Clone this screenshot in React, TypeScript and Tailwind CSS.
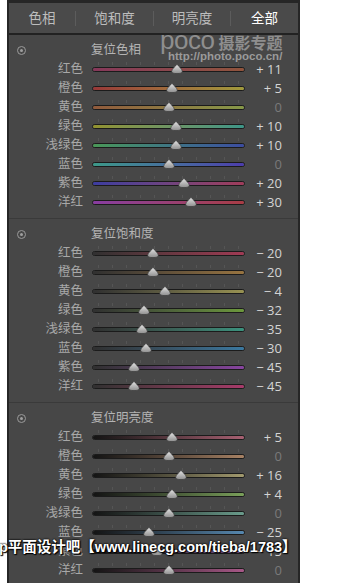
type Row = { label: string; value: number; track: string };

type Section = { title: string; rows: Row[] };

const sections: Section[] = [
  {
    title: "复位色相",
    rows: [
      { label: "红色", value: 11, track: "bg-linear-to-r from-[#86385a] to-[#90543c]" },
      { label: "橙色", value: 5, track: "bg-linear-to-r from-[#983838] to-[#a09a3c]" },
      { label: "黄色", value: 0, track: "bg-linear-to-r from-[#905a3c] to-[#869848]" },
      { label: "绿色", value: 10, track: "bg-linear-to-r from-[#92922e] to-[#3c9688]" },
      { label: "浅绿色", value: 10, track: "bg-linear-to-r from-[#4a9856] to-[#3c4ca0]" },
      { label: "蓝色", value: 0, track: "bg-linear-to-r from-[#3c9888] to-[#4c3cac]" },
      { label: "紫色", value: 20, track: "bg-linear-to-r from-[#3c3ca0] to-[#a03c5a]" },
      { label: "洋红", value: 30, track: "bg-linear-to-r from-[#883ca0] to-[#a83c44]" },
    ],
  },
  {
    title: "复位饱和度",
    rows: [
      { label: "红色", value: -20, track: "bg-linear-to-r from-[#303030] to-[#a03a54]" },
      { label: "橙色", value: -20, track: "bg-linear-to-r from-[#303030] to-[#987440]" },
      { label: "黄色", value: -4, track: "bg-linear-to-r from-[#303030] to-[#989252]" },
      { label: "绿色", value: -32, track: "bg-linear-to-r from-[#303030] to-[#6c983c]" },
      { label: "浅绿色", value: -35, track: "bg-linear-to-r from-[#303030] to-[#3a927e]" },
      { label: "蓝色", value: -30, track: "bg-linear-to-r from-[#303030] to-[#3a78a0]" },
      { label: "紫色", value: -45, track: "bg-linear-to-r from-[#303030] to-[#8844a0]" },
      { label: "洋红", value: -45, track: "bg-linear-to-r from-[#303030] to-[#a83a6a]" },
    ],
  },
  {
    title: "复位明亮度",
    rows: [
      { label: "红色", value: 5, track: "bg-linear-to-r from-[#141414] to-[#a86072]" },
      { label: "橙色", value: 0, track: "bg-linear-to-r from-[#141414] to-[#a88264]" },
      { label: "黄色", value: 16, track: "bg-linear-to-r from-[#141414] to-[#a29a6e]" },
      { label: "绿色", value: 4, track: "bg-linear-to-r from-[#141414] to-[#7aa05a]" },
      { label: "浅绿色", value: 0, track: "bg-linear-to-r from-[#141414] to-[#6a9c8c]" },
      { label: "蓝色", value: -25, track: "bg-linear-to-r from-[#141414] to-[#5688b0]" },
      { label: "紫色", value: -15, track: "bg-linear-to-r from-[#141414] to-[#885c9c]" },
      { label: "洋红", value: 0, track: "bg-linear-to-r from-[#141414] to-[#a85888]" },
    ],
  },
];

const tabs = [
  { name: "色相", width: "w-[66px]" },
  { name: "饱和度", width: "w-[78px]" },
  { name: "明亮度", width: "w-[77px]" },
  { name: "全部", width: "flex-1" },
];

function formatValue(v: number) {
  if (v === 0) return "0";
  return v > 0 ? `+ ${v}` : `− ${Math.abs(v)}`;
}

export default function App() {
  return (
    <div className="relative w-[344px] h-[583px] overflow-hidden bg-white font-['Noto_Sans','Noto_Sans_CJK_SC',sans-serif]">
      <div className="ml-[7px] w-[293px] h-full bg-[#474747] border-x-2 border-t-[3px] border-[#262626]">
        {/* Tab bar */}
        <div className="flex items-center h-[32px] bg-[#4a4a4a] border-b-2 border-[#222]">
          {tabs.map((t, i) => (
            <div key={t.name} className={`flex items-center ${t.width}`}>
              {i > 0 && <div className="w-px h-[15px] bg-[#5c5c5c]" />}
              <span
                className={`flex-1 text-center text-[13.5px] ${
                  t.name === "全部" ? "text-white" : "text-[#bdbdbd]"
                }`}
              >
                {t.name}
              </span>
            </div>
          ))}
        </div>

        {sections.map((s, i) => (
          <SliderSection key={s.title} section={s} last={i === sections.length - 1} />
        ))}
      </div>

      {/* poco watermark */}
      <div className="absolute left-[160px] top-[27px] flex flex-col leading-none text-[#8e8e8e] pointer-events-none">
        <div className="flex items-baseline">
          <span className="text-[26px] font-['Liberation_Sans',sans-serif] tracking-[-0.5px]">poco</span>
          <span className="ml-[4px] text-[16px] font-bold font-['Noto_Sans_CJK_SC',sans-serif]">摄影专题</span>
        </div>
        <span className="ml-[8px] -mt-[2px] text-[11.5px] font-bold font-['Liberation_Sans',sans-serif] text-[#9a9a9a]">
          http://photo.poco.cn/
        </span>
      </div>

      {/* bottom watermark */}
      <div className="absolute left-[-1px] top-[537px] whitespace-nowrap text-[14.5px] font-bold text-white font-['Liberation_Sans','Noto_Sans_CJK_SC',sans-serif] [text-shadow:0_0_2px_#000,0_0_2px_#000,1px_1px_1px_#000]">
        p平面设计吧【www.linecg.com/tieba/1783】
      </div>
    </div>
  );
}

function SliderSection({ section, last }: { section: Section; last: boolean }) {
  return (
    <div className={`pt-[6px] pb-[6px] ${last ? "" : "border-b border-[#3a3a3a]"}`}>
      <div className="flex items-center h-[19px]">
        <div className="ml-[8px] w-[9px] h-[9px] rounded-full border border-[#9a9a9a] flex items-center justify-center">
          <div className="w-[3px] h-[3px] rounded-full bg-[#a0a0a0]" />
        </div>
        <span className="ml-[65px] text-[12.5px] text-[#b4b4b4]">{section.title}</span>
      </div>
      {section.rows.map((r) => (
        <SliderRow key={r.label} row={r} />
      ))}
    </div>
  );
}

function SliderRow({ row }: { row: Row }) {
  const pct = ((row.value + 100) / 200) * 100;
  return (
    <div className="flex items-center h-[19px]">
      <span className="w-[74px] text-right text-[12.5px] text-[#a8a8a8]">{row.label}</span>
      <div className="relative ml-[9px] w-[153px] h-[19px] flex items-center">
        <div className="absolute left-[6px] right-[6px] top-[2px] h-[3px] bg-[repeating-linear-gradient(90deg,#555_0_1px,transparent_1px_14px)]" />
        <div className="w-full h-[5px] rounded-full border border-[#1b1b1b]">
          <div className={`w-full h-full rounded-full ${row.track}`} />
        </div>
        <svg
          className="absolute top-[4px] -translate-x-1/2"
          style={{ left: `${pct}%` }}
          width="12"
          height="10"
          viewBox="0 0 12 10"
        >
          <defs>
            <linearGradient id="thumb" x1="0" y1="0" x2="0" y2="1">
              <stop offset="0" stopColor="#e4e4e4" />
              <stop offset="1" stopColor="#8e8e8e" />
            </linearGradient>
          </defs>
          <path
            d="M6 0.3 C7 2 11.3 4.8 11.3 7.4 Q11.3 9.6 6 9.6 Q0.7 9.6 0.7 7.4 C0.7 4.8 5 2 6 0.3 Z"
            fill="url(#thumb)"
            stroke="#333"
            strokeWidth="0.6"
          />
        </svg>
      </div>
      <span
        className={`w-[37px] text-right text-[13px] font-['Open_Sans',sans-serif] ${
          row.value === 0 ? "text-[#7a7a7a]" : "text-[#d4d4d4]"
        }`}
      >
        {formatValue(row.value)}
      </span>
    </div>
  );
}
